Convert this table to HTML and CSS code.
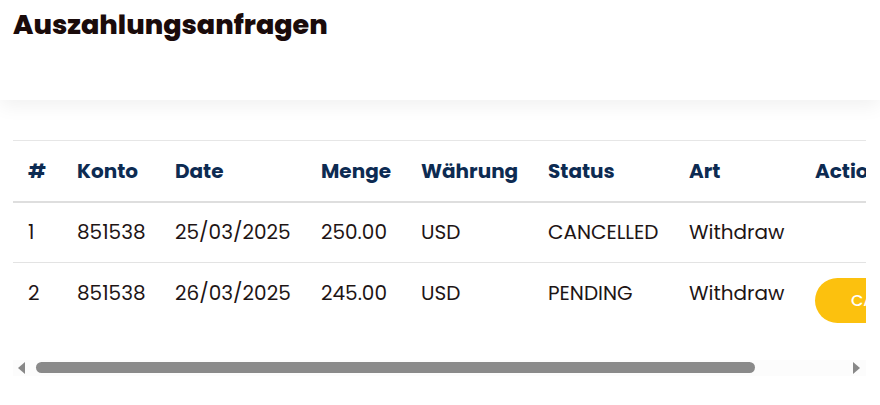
FILE: index.html
```html
<!DOCTYPE html>
<html lang="de">
<head>
<meta charset="utf-8">
<title>Auszahlungsanfragen</title>
<link rel="stylesheet" href="styles.css">
</head>
<body>
<header class="page-header">
  <h1 class="page-title">Auszahlungsanfragen</h1>
</header>
<main class="content">
  <div class="table-scroll">
    <table class="requests">
      <colgroup>
        <col class="c-num"><col class="c-konto"><col class="c-date"><col class="c-menge"><col class="c-cur"><col class="c-status"><col class="c-art"><col class="c-action">
      </colgroup>
      <thead>
        <tr>
          <th>#</th><th>Konto</th><th>Date</th><th>Menge</th><th>Währung</th><th>Status</th><th>Art</th><th>Actions</th>
        </tr>
      </thead>
      <tbody>
        <tr>
          <td>1</td><td>851538</td><td>25/03/2025</td><td>250.00</td><td>USD</td><td>CANCELLED</td><td>Withdraw</td><td></td>
        </tr>
        <tr>
          <td>2</td><td>851538</td><td>26/03/2025</td><td>245.00</td><td>USD</td><td>PENDING</td><td>Withdraw</td><td><button class="btn-cancel">CANCEL</button></td>
        </tr>
      </tbody>
    </table>
  </div>
  <div class="hscroll" aria-hidden="true">
    <span class="hscroll-btn"><span class="arrow arrow-left"></span></span>
    <span class="hscroll-track"><span class="hscroll-thumb"></span></span>
    <span class="hscroll-btn"><span class="arrow arrow-right"></span></span>
  </div>
</main>
</body>
</html>
```

FILE: styles.css
```css
* { box-sizing: border-box; }
html, body { margin: 0; padding: 0; background: #fff; }
body {
  font-family: "Poppins", "Open Sans", "DejaVu Sans", sans-serif;
  color: #1e1515;
}
.page-header {
  height: 100px;
  padding: 5px 13px 0;
  background: #fff;
  box-shadow: 0 6px 18px rgba(0, 0, 0, 0.06);
  position: relative;
}
.page-title {
  margin: 0;
  font-size: 27px;
  font-weight: 800;
  color: #1a0b0b;
}
.content {
  padding: 40px 14px 0 13px;
}
.table-scroll {
  overflow: hidden;
}
.requests {
  width: 956px;
  border-collapse: collapse;
  table-layout: fixed;
}
.c-num { width: 49px; }
.c-konto { width: 98px; }
.c-date { width: 146px; }
.c-menge { width: 100px; }
.c-cur { width: 127px; }
.c-status { width: 141px; }
.c-art { width: 126px; }
.c-action { width: 169px; }
.requests th,
.requests td {
  text-align: left;
  padding: 0 0 0 15px;
  white-space: nowrap;
  font-size: 20px;
}
.requests thead tr {
  border-top: 1px solid #e6e6e6;
  border-bottom: 2px solid #dedede;
}
.requests th {
  height: 61px;
  font-weight: 700;
  color: #0d2b52;
}
.requests td {
  height: 61px;
  font-weight: 400;
}
.requests tbody tr + tr {
  border-top: 1px solid #e3e3e3;
}
.btn-cancel {
  font-family: inherit;
  font-size: 16px;
  font-weight: 500;
  color: #fff;
  background: #fcc10e;
  border: 0;
  border-radius: 23px;
  height: 45px;
  padding: 0 36px;
  margin-top: 15px;
  cursor: pointer;
}
.hscroll {
  display: flex;
  height: 16px;
  margin-top: 36px;
  background: #fcfcfc;
}
.hscroll-btn {
  flex: 0 0 20px;
  display: flex;
  align-items: center;
}
.arrow {
  display: block;
  width: 0;
  height: 0;
  border-top: 6px solid transparent;
  border-bottom: 6px solid transparent;
}
.arrow-left {
  margin-left: 5px;
  border-right: 7px solid #888;
}
.arrow-right {
  margin-left: 7px;
  border-left: 7px solid #888;
}
.hscroll-track {
  flex: 1;
  display: flex;
  align-items: center;
}
.hscroll-thumb {
  display: block;
  width: 719px;
  height: 11px;
  margin-left: 3px;
  border-radius: 6px;
  background: #8a8a8a;
}
```
